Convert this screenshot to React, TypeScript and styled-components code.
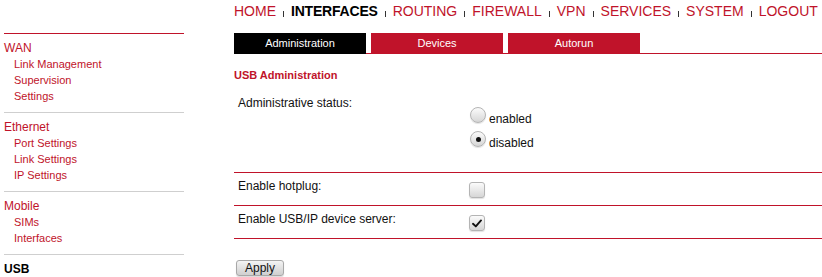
import React from "react";
import styled, { createGlobalStyle, css } from "styled-components";

const RED = "#c0132a";

const Global = createGlobalStyle`
  html, body { margin: 0; padding: 0; background: #fff; }
  body { font-family: "Liberation Sans", Arial, sans-serif; color: #000; }
`;

const Page = styled.div`
  display: flex;
  padding-left: 4px;
  width: 822px;
  box-sizing: border-box;
`;

const Sidebar = styled.nav`
  width: 180px;
  flex: none;
  padding-top: 33px;
`;

const Group = styled.div<{ $first?: boolean }>`
  border-top: 1px solid ${(p) => (p.$first ? RED : "#cfcfcf")};
  padding: 6px 0 8px;
`;

const GroupTitle = styled.div<{ $active?: boolean }>`
  font-size: 12px;
  line-height: 16px;
  color: ${(p) => (p.$active ? "#000" : RED)};
  font-weight: ${(p) => (p.$active ? "bold" : "normal")};
`;

const SubItem = styled.div`
  font-size: 11px;
  line-height: 16px;
  padding-left: 10px;
  color: ${RED};
`;

const Main = styled.main`
  flex: 1;
  margin-left: 50px;
`;

const TopNav = styled.div`
  height: 33px;
  box-sizing: border-box;
  padding-top: 3px;
  font-size: 14px;
  line-height: 16px;
  white-space: nowrap;
`;

const NavLink = styled.span<{ $active?: boolean }>`
  color: ${(p) => (p.$active ? "#000" : RED)};
  font-weight: ${(p) => (p.$active ? "bold" : "normal")};
  letter-spacing: ${(p) => (p.$active ? "-0.2px" : "0")};
`;

const NavSep = styled.span`
  display: inline-block;
  width: 1px;
  height: 6px;
  background: #333;
  margin: 0 7px;
  vertical-align: -1px;
`;

const TabBar = styled.div`
  display: flex;
  gap: 5px;
  border-bottom: 1px solid ${RED};
  height: 20px;
`;

const Tab = styled.div<{ $active?: boolean }>`
  width: 132px;
  height: 21px;
  flex: none;
  background: ${(p) => (p.$active ? "#000" : RED)};
  color: #fff;
  font-size: 11px;
  line-height: 20px;
  text-align: center;
`;

const Heading = styled.div`
  margin-top: 14px;
  margin-bottom: 8px;
  font-size: 11px;
  line-height: 14px;
  font-weight: bold;
  color: ${RED};
`;

const FormRow = styled.div<{ $tall?: boolean }>`
  display: grid;
  grid-template-columns: 231px 1fr;
  padding: ${(p) => (p.$tall ? "6px 4px 22px" : "6px 4px 6px")};
  border-bottom: 1px solid ${RED};
  min-height: ${(p) => (p.$tall ? "0" : "20px")};
`;

const Label = styled.div`
  font-size: 12px;
  line-height: 14px;
  color: #111;
`;

const Control = styled.div<{ $pt: number }>`
  padding-top: ${(p) => p.$pt}px;
  display: flex;
  flex-direction: column;
`;

const Option = styled.label`
  display: flex;
  align-items: flex-end;
  height: 24px;
  font-size: 12px;
  line-height: 14px;
  color: #111;
`;

const controlSkin = css`
  width: 16px;
  height: 16px;
  box-sizing: border-box;
  flex: none;
  border: 1px solid #b4b4b4;
  background: linear-gradient(#fbfbfb, #d6d6d6);
  box-shadow: 0 1px 1px rgba(0, 0, 0, 0.12);
  display: flex;
  align-items: center;
  justify-content: center;
`;

const Radio = styled.span<{ $checked?: boolean }>`
  ${controlSkin}
  border-radius: 50%;
  margin: 0 3px 3px 1px;
  &::after {
    content: "";
    width: 5px;
    height: 5px;
    border-radius: 50%;
    background: ${(p) => (p.$checked ? "#111" : "transparent")};
  }
`;

const Check = styled.span`
  ${controlSkin}
  border-radius: 3px;
`;

const ApplyButton = styled.button`
  margin: 21px 0 0 2px;
  width: 48px;
  height: 16px;
  padding: 0;
  font-family: inherit;
  font-size: 12px;
  line-height: 14px;
  color: #111;
  border: 1px solid #a8a8a8;
  border-radius: 3px;
  background: linear-gradient(#f4f4f4, #cfcfcf);
  box-shadow: 0 1px 1px rgba(0, 0, 0, 0.15);
`;

const groups = [
  { title: "WAN", items: ["Link Management", "Supervision", "Settings"] },
  { title: "Ethernet", items: ["Port Settings", "Link Settings", "IP Settings"] },
  { title: "Mobile", items: ["SIMs", "Interfaces"] },
];

const nav = ["HOME", "INTERFACES", "ROUTING", "FIREWALL", "VPN", "SERVICES", "SYSTEM", "LOGOUT"];

export default function App() {
  return (
    <>
      <Global />
      <Page>
        <Sidebar>
          {groups.map((g, i) => (
            <Group key={g.title} $first={i === 0}>
              <GroupTitle>{g.title}</GroupTitle>
              {g.items.map((it) => (
                <SubItem key={it}>{it}</SubItem>
              ))}
            </Group>
          ))}
          <Group>
            <GroupTitle $active>USB</GroupTitle>
          </Group>
        </Sidebar>
        <Main>
          <TopNav>
            {nav.map((n, i) => (
              <React.Fragment key={n}>
                {i > 0 && <NavSep />}
                <NavLink $active={n === "INTERFACES"}>{n}</NavLink>
              </React.Fragment>
            ))}
          </TopNav>
          <TabBar>
            <Tab $active>Administration</Tab>
            <Tab>Devices</Tab>
            <Tab>Autorun</Tab>
          </TabBar>
          <Heading>USB Administration</Heading>
          <FormRow $tall>
            <Label>Administrative status:</Label>
            <Control $pt={6}>
              <Option>
                <Radio />
                enabled
              </Option>
              <Option>
                <Radio $checked />
                disabled
              </Option>
            </Control>
          </FormRow>
          <FormRow>
            <Label>Enable hotplug:</Label>
            <Control $pt={3}>
              <Check />
            </Control>
          </FormRow>
          <FormRow>
            <Label>Enable USB/IP device server:</Label>
            <Control $pt={3}>
              <Check>
                <svg width="10" height="9" viewBox="0 0 10 9">
                  <path d="M1 4.8 L3.8 7.4 L9 1.4" fill="none" stroke="#111" strokeWidth="1.9" strokeLinecap="round" strokeLinejoin="round" />
                </svg>
              </Check>
            </Control>
          </FormRow>
          <ApplyButton>Apply</ApplyButton>
        </Main>
      </Page>
    </>
  );
}
